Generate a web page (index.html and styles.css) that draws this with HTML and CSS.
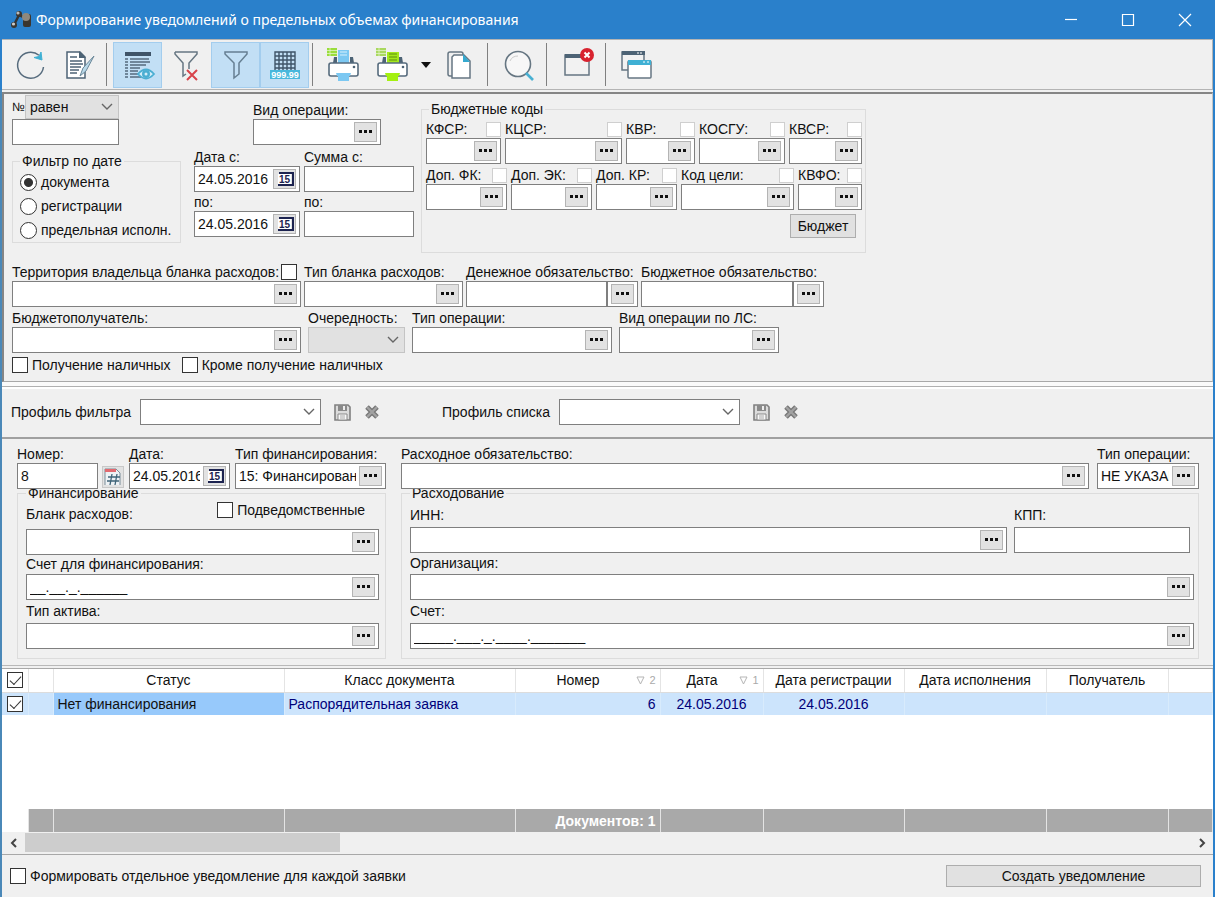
FILE: index.html
```html
<!DOCTYPE html>
<html lang="ru">
<head>
<meta charset="utf-8">
<title>Формирование уведомлений о предельных объемах финансирования</title>
<link rel="stylesheet" href="styles.css">
</head>
<body>
<svg class="sprite" aria-hidden="true">
  <symbol id="dots" viewBox="0 0 14 4"><path d="M0 0h3v3H0zM5 0h3v3H5zM10 0h3v3h-3z" fill="#111"/></symbol>
  <symbol id="chev" viewBox="0 0 12 8"><path d="M1 1l5 5 5-5" fill="none" stroke="#666" stroke-width="1.4"/></symbol>
  <symbol id="cal" viewBox="0 0 18 16"><path d="M3 2h14v13" fill="none" stroke="#1c2350" stroke-width="2"/><path d="M2 3h13v11H2z" fill="#fff"/><path d="M2 14h15" stroke="#1c2350" stroke-width="2"/><text x="3" y="12" font-size="10" font-weight="700" font-family="Liberation Sans, sans-serif" fill="#1c2350">15</text></symbol>
  <symbol id="save" viewBox="0 0 17 17"><path d="M1 1h13l2 2v13H1z" fill="#dcdcdc" stroke="#808080" stroke-width="1.600"/><path d="M4 1h9v6H4z" fill="#8a8a8a"/><path d="M9 2h2v4H9z" fill="#eee"/><path d="M4 10h9v6H4z" fill="#f8f8f8" stroke="#8a8a8a"/><path d="M6 12h5M6 14h5" stroke="#aaa"/></symbol>
  <symbol id="del" viewBox="0 0 14 14"><path d="M2 2l10 10M12 2L2 12" stroke="#777" stroke-width="5"/><path d="M2 2l10 10M12 2L2 12" stroke="#a2a2a2" stroke-width="2.4"/></symbol>
  <symbol id="tri" viewBox="0 0 9 9"><path d="M1 1h7L4.500 8z" fill="#fff" stroke="#b5b5b5"/></symbol>
</svg>

<header class="titlebar">
  <svg class="app-icon" viewBox="0 0 21 20"><path d="M3 15L8 5l7 3" stroke="#333" stroke-width="2.500" fill="none"/><rect x="12" y="4" width="8" height="13" rx="2" fill="#3a352f"/><circle cx="15" cy="7" r="4" fill="#8f887c"/><circle cx="8" cy="4" r="3" fill="#3a352f"/><circle cx="7" cy="3" r="1.600" fill="#bbb"/><circle cx="3" cy="15" r="3" fill="#3a352f"/><circle cx="2.500" cy="14" r="1.600" fill="#ccc"/></svg>
  <h1 class="title">Формирование уведомлений о предельных объемах финансирования</h1>
  <div class="win-controls">
    <button class="win-btn" aria-label="Свернуть"><svg viewBox="0 0 14 14"><path d="M1 6.500h12"/></svg></button>
    <button class="win-btn" aria-label="Развернуть"><svg viewBox="0 0 14 14"><path d="M1.500 1.500h11v11h-11z"/></svg></button>
    <button class="win-btn" aria-label="Закрыть"><svg viewBox="0 0 14 14"><path d="M1 1l12 12M13 1L1 13"/></svg></button>
  </div>
</header>

<nav class="toolbar">
  <button class="tool" aria-label="Обновить"><svg viewBox="0 0 36 36" fill="none" stroke="#566b7d" stroke-width="1.500"><path d="M31.500 20A13 13 0 1 1 27 8.300"/><path d="M29 5l1 8-8-2.500 5-1z" fill="#3fb0d4" stroke="#3fb0d4" stroke-width="1"/></svg></button>
  <button class="tool" aria-label="Редактировать"><svg viewBox="0 0 36 36"><path d="M6 5h13l5 5v21H6z" fill="#fff" stroke="#4d6375" stroke-width="1.500"/><path d="M18 4l7 7h-7z" fill="#4d6375"/><path d="M9 10h7M9 14h12M9 17h13M9 20h11M9 23h9M9 26h7" stroke="#4d6375" stroke-width="1.500"/><path d="M33 9L22 21l-3 8 6-5L33 9z" fill="#b9d9ea" stroke="#6a8798"/></svg></button>
  <span class="tool-sep"></span>
  <button class="tool tool-on" aria-label="Просмотр" aria-pressed="true"><svg viewBox="0 0 36 36"><path d="M5 5h26v4H5z" fill="#3f5468"/><path d="M5 12h3M10 12h19M5 15h3M10 15h20M5 18h3M10 18h16M5 21h3M10 21h10M5 24h3M10 24h8M5 27h3M10 27h8M5 30h3M10 30h11" stroke="#566b7d" stroke-width="1.400"/><path d="M18 27q8-9 16 0q-8 9-16 0z" fill="#d4edf8" stroke="#4aaed2" stroke-width="1.800"/><circle cx="26" cy="27" r="4" fill="#4aaed2"/><circle cx="26" cy="27" r="1.500" fill="#d4edf8"/></svg></button>
  <button class="tool" aria-label="Сбросить фильтр"><svg viewBox="0 0 36 36" fill="none"><path d="M6 5h22v2l-8 9v6M6 5v2l8 9v13l3-2" stroke="#667682" stroke-width="1.500"/><path d="M18 23l10 10M28 23L18 33" stroke="#d8434a" stroke-width="2"/></svg></button>
  <button class="tool tool-on" aria-label="Фильтр" aria-pressed="true"><svg viewBox="0 0 36 36" fill="none"><path d="M7 5h22v2l-8 9v11l-5 4V16L7 7z" stroke="#667f92" stroke-width="1.500"/></svg></button>
  <button class="tool tool-on" aria-label="Суммы" aria-pressed="true"><svg viewBox="0 0 36 36"><path d="M8 5h20v19H8zM12 5v19M16 5v19M20 5v19M24 5v19M8 9h20M8 13h20M8 17h20M8 21h20" fill="none" stroke="#3f5468" stroke-width="1.400"/><path d="M3 23h30v9H3z" fill="#48b8dc"/><text x="18" y="31" text-anchor="middle" font-size="9" font-weight="700" font-family="Liberation Sans, sans-serif" fill="#fff">999.99</text></svg></button>
  <span class="tool-sep"></span>
  <button class="tool" aria-label="Печать"><svg viewBox="0 0 36 36"><path d="M8 10h3v6H7zM24 10h3l1 6h-4z" fill="#4d6375"/><path d="M12 3h11v14H12z" fill="#7cc8f2"/><path d="M14 5h7M14 8h7" stroke="#d8f0fc"/><rect x="3" y="16" width="29" height="13" rx="2" fill="#fff" stroke="#566b7d" stroke-width="1.600"/><circle cx="28" cy="20" r="1.300" fill="#4d6375"/><path d="M10 26h15l-1 3h-1v5H12v-5h-1z" fill="#7cc8f2"/><path d="M1 1h10v8H1z" fill="#9add3c"/><path d="M1 3.500h10M1 6.500h10M4 1v8" stroke="#eaf7d6" stroke-width=".7"/></svg></button>
  <button class="tool" aria-label="Печать списка"><svg viewBox="0 0 36 36"><path d="M8 10h3v6H7zM24 10h3l1 6h-4z" fill="#4d6375"/><path d="M12 5h12v12H12z" fill="#a4e81c"/><path d="M14 7h8M14 10h8M14 13h8" stroke="#5f8e12"/><rect x="3" y="16" width="29" height="13" rx="2" fill="#fff" stroke="#566b7d" stroke-width="1.600"/><circle cx="28" cy="20" r="1.300" fill="#4d6375"/><path d="M10 26h15l-1 3h-1v5H12v-5h-1z" fill="#a4f010"/><path d="M1 1h10v8H1z" fill="#a9d85f"/><path d="M1 3.500h10M1 6.500h10M4 1v8" stroke="#eaf7d6" stroke-width=".7"/></svg></button>
  <button class="tool tool-arrow" aria-label="Варианты печати"><svg viewBox="0 0 10 6"><path d="M0 0h10L5 6z" fill="#111"/></svg></button>
  <button class="tool" aria-label="Копировать"><svg viewBox="0 0 36 36"><rect x="6" y="5" width="15" height="24" rx="2" fill="#f0f0f0" stroke="#667682" stroke-width="1.500"/><path d="M12 8h10l6 6v17H10V10z" fill="#fff" stroke="#667682" stroke-width="1.500"/><path d="M21 7l7 8h-7z" fill="#36a9cf"/></svg></button>
  <span class="tool-sep"></span>
  <button class="tool" aria-label="Поиск"><svg viewBox="0 0 36 36" fill="none"><circle cx="17" cy="17" r="12.500" fill="#f7f7f7" stroke="#667682" stroke-width="1.600"/><path d="M9 14q2-5 8-5" stroke="#ccc"/><path d="M25 26l7 7" stroke="#48b0d2" stroke-width="2.600"/></svg></button>
  <span class="tool-sep"></span>
  <button class="tool" aria-label="Закрыть окно"><svg viewBox="0 0 36 36"><path d="M5 8h24v20H5z" fill="#f2f2f2" stroke="#667682" stroke-width="1.500"/><path d="M5 7h17v4H5z" fill="#4d6375"/><circle cx="27" cy="8" r="7" fill="#d8232f"/><path d="M24.500 5.500l5 5M29.500 5.500l-5 5" stroke="#fff" stroke-width="2"/></svg></button>
  <span class="tool-sep"></span>
  <button class="tool" aria-label="Окна"><svg viewBox="0 0 36 36"><path d="M3 5h22v18H3z" fill="#f2f2f2" stroke="#667682" stroke-width="1.500"/><path d="M3 4h23v4H3z" fill="#4d6375"/><path d="M18 6h2M21 6h2" stroke="#fff"/><rect x="9" y="14" width="23" height="17" rx="1" fill="#fff" stroke="#667682" stroke-width="1.500"/><path d="M9 13h23v5H9z" fill="#3fb0d4"/><path d="M24 15h2M28 15h2" stroke="#fff"/></svg></button>
</nav>

<main class="work">
<section class="filter">
  <div class="filter-top">
    <div class="col-doc">
      <div class="num-row"><label class="num-label" for="num">№</label>
        <span class="combo combo-gray num-op"><select aria-label="Условие"><option>равен</option></select><svg class="chev"><use href="#chev"/></svg></span></div>
      <div class="box w-num"><input id="num" type="text"></div>
      <fieldset class="group radios">
        <legend>Фильтр по дате</legend>
        <label class="radio"><input type="radio" name="kind" checked>документа</label>
        <label class="radio"><input type="radio" name="kind">регистрации</label>
        <label class="radio"><input type="radio" name="kind">предельная исполн.</label>
      </fieldset>
    </div>
    <div class="col-dates">
      <div class="field field-op"><label for="op">Вид операции:</label><div class="box"><input id="op" type="text"><button class="pick" aria-label="Выбрать"><svg><use href="#dots"/></svg></button></div></div>
      <div class="pair pair-first">
        <div class="field w-date"><label for="d1">Дата с:</label><div class="box"><input id="d1" type="text" value="24.05.2016"><button class="pick cal" aria-label="Календарь"><svg><use href="#cal"/></svg></button></div></div>
        <div class="field w-sum"><label for="s1">Сумма с:</label><div class="box"><input id="s1" type="text"></div></div>
      </div>
      <div class="pair">
        <div class="field w-date"><label for="d2">по:</label><div class="box"><input id="d2" type="text" value="24.05.2016"><button class="pick cal" aria-label="Календарь"><svg><use href="#cal"/></svg></button></div></div>
        <div class="field w-sum"><label for="s2">по:</label><div class="box"><input id="s2" type="text"></div></div>
      </div>
    </div>
    <fieldset class="group codes">
      <legend>Бюджетные коды</legend>
      <div class="code-row code-row-a">
        <div class="field"><div class="cap"><label for="c1">КФСР:</label><input class="mini" type="checkbox" aria-label="Кроме КФСР"></div><div class="box"><input id="c1" type="text"><button class="pick" aria-label="Выбрать"><svg><use href="#dots"/></svg></button></div></div>
        <div class="field"><div class="cap"><label for="c2">КЦСР:</label><input class="mini" type="checkbox" aria-label="Кроме КЦСР"></div><div class="box"><input id="c2" type="text"><button class="pick" aria-label="Выбрать"><svg><use href="#dots"/></svg></button></div></div>
        <div class="field"><div class="cap"><label for="c3">КВР:</label><input class="mini" type="checkbox" aria-label="Кроме КВР"></div><div class="box"><input id="c3" type="text"><button class="pick" aria-label="Выбрать"><svg><use href="#dots"/></svg></button></div></div>
        <div class="field"><div class="cap"><label for="c4">КОСГУ:</label><input class="mini" type="checkbox" aria-label="Кроме КОСГУ"></div><div class="box"><input id="c4" type="text"><button class="pick" aria-label="Выбрать"><svg><use href="#dots"/></svg></button></div></div>
        <div class="field"><div class="cap"><label for="c5">КВСР:</label><input class="mini" type="checkbox" aria-label="Кроме КВСР"></div><div class="box"><input id="c5" type="text"><button class="pick" aria-label="Выбрать"><svg><use href="#dots"/></svg></button></div></div>
      </div>
      <div class="code-row code-row-b">
        <div class="field"><div class="cap"><label for="c6">Доп. ФК:</label><input class="mini" type="checkbox" aria-label="Кроме Доп. ФК"></div><div class="box"><input id="c6" type="text"><button class="pick" aria-label="Выбрать"><svg><use href="#dots"/></svg></button></div></div>
        <div class="field"><div class="cap"><label for="c7">Доп. ЭК:</label><input class="mini" type="checkbox" aria-label="Кроме Доп. ЭК"></div><div class="box"><input id="c7" type="text"><button class="pick" aria-label="Выбрать"><svg><use href="#dots"/></svg></button></div></div>
        <div class="field"><div class="cap"><label for="c8">Доп. КР:</label><input class="mini" type="checkbox" aria-label="Кроме Доп. КР"></div><div class="box"><input id="c8" type="text"><button class="pick" aria-label="Выбрать"><svg><use href="#dots"/></svg></button></div></div>
        <div class="field"><div class="cap"><label for="c9">Код цели:</label><input class="mini" type="checkbox" aria-label="Кроме кода цели"></div><div class="box"><input id="c9" type="text"><button class="pick" aria-label="Выбрать"><svg><use href="#dots"/></svg></button></div></div>
        <div class="field"><div class="cap"><label for="c10">КВФО:</label><input class="mini" type="checkbox" aria-label="Кроме КВФО"></div><div class="box"><input id="c10" type="text"><button class="pick" aria-label="Выбрать"><svg><use href="#dots"/></svg></button></div></div>
      </div>
      <button class="btn btn-budget">Бюджет</button>
    </fieldset>
  </div>

  <div class="filter-row filter-row-a">
    <div class="field w-long"><div class="cap"><label for="f1">Территория владельца бланка расходов:</label><input class="check" type="checkbox" aria-label="Кроме территории"></div><div class="box"><input id="f1" type="text"><button class="pick" aria-label="Выбрать"><svg><use href="#dots"/></svg></button></div></div>
    <div class="field w-blank"><label for="f2">Тип бланка расходов:</label><div class="box"><input id="f2" type="text"><button class="pick" aria-label="Выбрать"><svg><use href="#dots"/></svg></button></div></div>
    <div class="field w-money"><label for="f3">Денежное обязательство:</label><div class="box split"><input id="f3" type="text"><button class="pick" aria-label="Выбрать"><svg><use href="#dots"/></svg></button></div></div>
    <div class="field w-duty"><label for="f4">Бюджетное обязательство:</label><div class="box split"><input id="f4" type="text"><button class="pick" aria-label="Выбрать"><svg><use href="#dots"/></svg></button></div></div>
  </div>
  <div class="filter-row filter-row-b">
    <div class="field w-long"><label for="f5">Бюджетополучатель:</label><div class="box"><input id="f5" type="text"><button class="pick" aria-label="Выбрать"><svg><use href="#dots"/></svg></button></div></div>
    <div class="field w-order"><label for="f6">Очередность:</label><span class="combo combo-gray"><select id="f6"><option></option></select><svg class="chev"><use href="#chev"/></svg></span></div>
    <div class="field w-type"><label for="f7">Тип операции:</label><div class="box"><input id="f7" type="text"><button class="pick" aria-label="Выбрать"><svg><use href="#dots"/></svg></button></div></div>
    <div class="field w-acc"><label for="f8">Вид операции по ЛС:</label><div class="box"><input id="f8" type="text"><button class="pick" aria-label="Выбрать"><svg><use href="#dots"/></svg></button></div></div>
  </div>
  <div class="filter-checks">
    <label class="tick"><input class="check" type="checkbox">Получение наличных</label>
    <label class="tick"><input class="check" type="checkbox">Кроме получение наличных</label>
  </div>
</section>

<section class="profiles">
  <div class="profile profile-a"><label for="p1">Профиль фильтра</label><span class="combo"><select id="p1"><option></option></select><svg class="chev"><use href="#chev"/></svg></span>
    <button class="icon-btn" aria-label="Сохранить"><svg class="ic-save"><use href="#save"/></svg></button><button class="icon-btn" aria-label="Удалить"><svg class="ic-del"><use href="#del"/></svg></button></div>
  <div class="profile profile-b"><label for="p2">Профиль списка</label><span class="combo"><select id="p2"><option></option></select><svg class="chev"><use href="#chev"/></svg></span>
    <button class="icon-btn" aria-label="Сохранить"><svg class="ic-save"><use href="#save"/></svg></button><button class="icon-btn" aria-label="Удалить"><svg class="ic-del"><use href="#del"/></svg></button></div>
</section>

<section class="doc">
  <div class="doc-top doc-top-left">
    <div class="field w-no"><label for="n1">Номер:</label><div class="box"><input id="n1" type="text" value="8"></div></div>
    <button class="gen" aria-label="Сгенерировать номер"><svg viewBox="0 0 20 20"><path d="M2 18V2h11l4 4v12" fill="#eef2f5" stroke="#7b8d99"/><path d="M2 2h11v3H2z" fill="#e26a70"/><path d="M5 10h12M4 14h12M9 7L7 18M14 7l-2 11" stroke="#3f6478" stroke-width="1.300"/></svg></button>
    <div class="field w-day"><label for="n2">Дата:</label><div class="box"><input id="n2" type="text" value="24.05.2016"><button class="pick cal" aria-label="Календарь"><svg><use href="#cal"/></svg></button></div></div>
    <div class="field w-fin"><label for="n3">Тип финансирования:</label><div class="box"><input id="n3" type="text" value="15: Финансирование"><button class="pick" aria-label="Выбрать"><svg><use href="#dots"/></svg></button></div></div>
  </div>
  <div class="doc-top doc-top-right">
    <div class="field grow"><label for="n4">Расходное обязательство:</label><div class="box"><input id="n4" type="text"><button class="pick" aria-label="Выбрать"><svg><use href="#dots"/></svg></button></div></div>
    <div class="field w-optype"><label for="n5">Тип операции:</label><div class="box"><input id="n5" type="text" value="НЕ УКАЗАНА"><button class="pick" aria-label="Выбрать"><svg><use href="#dots"/></svg></button></div></div>
  </div>
  <fieldset class="group doc-group">
    <legend>Финансирование</legend>
    <div class="field row-1"><div class="cap"><label for="g1">Бланк расходов:</label><label class="tick sub"><input class="check" type="checkbox">Подведомственные</label></div><div class="box"><input id="g1" type="text"><button class="pick" aria-label="Выбрать"><svg><use href="#dots"/></svg></button></div></div>
    <div class="field row-2"><label for="g2">Счет для финансирования:</label><div class="box"><input id="g2" type="text" value="__.__._.______"><button class="pick" aria-label="Выбрать"><svg><use href="#dots"/></svg></button></div></div>
    <div class="field row-3"><label for="g3">Тип актива:</label><div class="box"><input id="g3" type="text"><button class="pick" aria-label="Выбрать"><svg><use href="#dots"/></svg></button></div></div>
  </fieldset>
  <fieldset class="group doc-group spend">
    <legend>Расходование</legend>
    <div class="inn-row">
      <div class="field grow"><label for="h1">ИНН:</label><div class="box"><input id="h1" type="text"><button class="pick" aria-label="Выбрать"><svg><use href="#dots"/></svg></button></div></div>
      <div class="field w-kpp"><label for="h2">КПП:</label><div class="box"><input id="h2" type="text"></div></div>
    </div>
    <div class="field row-2"><label for="h3">Организация:</label><div class="box"><input id="h3" type="text"><button class="pick" aria-label="Выбрать"><svg><use href="#dots"/></svg></button></div></div>
    <div class="field row-3"><label for="h4">Счет:</label><div class="box"><input id="h4" type="text" value="_____.___._.____._______"><button class="pick" aria-label="Выбрать"><svg><use href="#dots"/></svg></button></div></div>
  </fieldset>
</section>

<section class="list">
  <table class="grid">
    <colgroup><col class="c-check"><col class="c-mark"><col class="c-status"><col class="c-class"><col class="c-num"><col class="c-date"><col class="c-reg"><col class="c-exec"><col class="c-rcpt"><col></colgroup>
    <thead><tr><th><input class="check" type="checkbox" checked aria-label="Выбрать все"></th><th></th><th>Статус</th><th>Класс документа</th>
      <th><span class="sorted"><span>Номер</span><small><svg><use href="#tri"/></svg>2</small></span></th>
      <th><span class="sorted"><span>Дата</span><small><svg><use href="#tri"/></svg>1</small></span></th>
      <th>Дата регистрации</th><th>Дата исполнения</th><th>Получатель</th><th></th></tr></thead>
    <tbody><tr class="row"><td><input class="check" type="checkbox" checked aria-label="Выбрать строку"></td><td></td><td class="status">Нет финансирования</td><td>Распорядительная заявка</td><td class="num">6</td><td class="mid">24.05.2016</td><td class="mid">24.05.2016</td><td></td><td></td><td></td></tr>
      <tr class="filler"><td colspan="10"></td></tr></tbody>
    <tfoot><tr><td></td><td></td><td></td><td></td><td class="total">Документов: 1</td><td></td><td></td><td></td><td></td><td></td></tr></tfoot>
  </table>
  <div class="scroll"><button class="scroll-btn" aria-label="Влево"><svg viewBox="0 0 8 10"><path d="M6 1L2 5l4 4"/></svg></button><div class="track"><div class="thumb"></div></div><button class="scroll-btn" aria-label="Вправо"><svg viewBox="0 0 8 10"><path d="M2 1l4 4-4 4"/></svg></button></div>
</section>

<footer class="actions">
  <label class="tick"><input class="check" type="checkbox">Формировать отдельное уведомление для каждой заявки</label>
  <button class="btn btn-create">Создать уведомление</button>
</footer>
</main>
</body>
</html>
```
FILE: styles.css
```css
* { box-sizing: border-box; }
body {
  margin: 0;
  min-height: 100vh;
  display: flex;
  flex-direction: column;
  background: #2a80cb;
  color: #111;
  font: 14px/18px "Liberation Sans", Arial, sans-serif;
}
input, button, select { font: inherit; color: inherit; margin: 0; }
button { padding: 0; border: 0; background: none; }
label { white-space: nowrap; }
.sprite { display: none; }

/* Title bar */
.titlebar { display: flex; align-items: center; height: 39px; padding: 0 2px 0 11px; color: #fff; }
.app-icon { width: 21px; height: 20px; margin-right: 4px; }
.title { flex: 1; margin: 0; font: 400 14px/20px "Noto Sans", "Open Sans", sans-serif; white-space: nowrap; }
.win-controls { display: flex; }
.win-btn { width: 57px; height: 38px; display: grid; place-items: center; }
.win-btn svg { width: 14px; height: 14px; fill: none; stroke: #fff; stroke-width: 1.2; }

/* Toolbar */
.toolbar { display: flex; align-items: center; height: 51px; margin: 0 2px; padding-left: 3px; border: 1px solid #b4b4b4; border-left: 0; background: #f0f0f0; }
.tool { width: 49px; height: 46px; display: grid; place-items: center; }
.tool svg { width: 36px; height: 36px; }
.tool-on { background: #c2dff5; border: 1px solid #a3cdee; }
.tool-arrow { width: 18px; }
.tool-arrow svg { width: 10px; height: 6px; }
.tool-sep { width: 10px; height: 43px; display: flex; padding-left: 3px; }
.tool-sep::before { content: ""; width: 1px; background: #808080; }

.work { flex: 1; display: flex; flex-direction: column; border: solid #2a80cb; border-width: 0 2px; border-left-color: #4a88b8; background: #f0f0f0; }

/* Form controls */
.field { display: flex; flex-direction: column; min-width: 0; }
.field > label, .cap { height: 18px; }
.cap { display: flex; justify-content: space-between; align-items: center; }
.box { display: flex; align-items: center; height: 26px; padding-right: 3px; border: 1px solid #7f7f7f; background: #fff; }
.box input { flex: 1; min-width: 0; width: 0; height: 24px; padding: 0 3px; border: 0; background: transparent; outline: 0; }
.pick { flex: none; width: 23px; height: 20px; display: grid; place-items: center; border: 1px solid #b4b4b4; background: #e2e2e2; }
.pick svg { width: 14px; height: 4px; }
.pick.cal svg { width: 18px; height: 16px; }
.box.split input { margin-right: 3px; border-right: 2px solid #7f7f7f; }
.combo { display: grid; align-items: center; height: 26px; border: 1px solid #7f7f7f; background: #fff; }
.combo select { grid-area: 1 / 1; width: 100%; height: 24px; padding: 0 4px; border: 0; background: transparent; appearance: none; outline: 0; }
.combo .chev { grid-area: 1 / 1; justify-self: end; width: 12px; height: 8px; margin-right: 5px; pointer-events: none; }
.combo-gray { border-color: #c4c4c4; background: #e1e1e1; }
.check, .mini { appearance: none; flex: none; width: 16px; height: 16px; border: 1px solid #333; background: #fff; }
.mini { width: 15px; height: 15px; border-color: #cfcfcf; }
.check:checked { display: inline-grid; place-items: center; }
.check:checked::before { content: ""; width: 10px; height: 5px; border: solid #333; border-width: 0 0 1px 1px; transform: translateY(-1px) rotate(-47deg); }
.tick { display: inline-flex; align-items: center; gap: 4px; }
.group { min-width: 0; margin: 0; padding: 0; border: 1px solid #dcdcdc; }
.group legend { height: 16px; margin-left: 7px; padding: 0 2px; line-height: 16px; }
.btn { border: 1px solid #adadad; background: #e1e1e1; }
.grow { flex: 1; }

/* Filter panel */
.filter { margin-top: 2px; padding: 0 8px 7px; border: 2px solid #858585; border-width: 2px 1px 1px 2px; border-right-color: #c4c4c4; border-bottom-color: #a8a8a8; }
.filter-top { display: flex; align-items: flex-start; }
.col-doc { width: 169px; padding-top: 1px; }
.num-row { display: flex; align-items: center; height: 24px; width: 107px; }
.num-label { width: 13px; font-size: 12px; }
.num-op { flex: 1; height: 24px; }
.num-op select { height: 22px; }
.w-num { width: 107px; }
.radios { margin-top: 8px; }
.radio { display: flex; align-items: center; gap: 4px; height: 24px; padding-left: 7px; }
.radio:first-of-type { margin-top: 1px; }
.radio input { appearance: none; width: 17px; height: 17px; border: 1px solid #333; border-radius: 50%; background: #fff; }
.radio input:checked { background: radial-gradient(circle, #333 0 4px, #fff 5px); }
.col-dates { width: 220px; margin-left: 13px; padding-top: 7px; }
.field-op { width: 128px; margin-left: 59px; }
.pair { display: flex; gap: 4px; margin-top: 1px; }
.pair-first { margin-top: 3px; }
.w-date { width: 106px; }
.w-sum { width: 110px; }
.codes { width: 445px; margin: 7px 0 0 7px; padding: 3px 3px 14px 4px; display: flow-root; }
.codes legend { margin-left: 3px; }
.code-row { display: grid; column-gap: 4px; }
.code-row-a { grid-template-columns: 75fr 117fr 69fr 86fr 73fr; }
.code-row-b { grid-template-columns: 81fr 81fr 81fr 113fr 64fr; margin-top: 2px; }
.btn-budget { display: block; width: 66px; height: 24px; margin: 4px 6px 0 auto; }
.filter-row { display: flex; }
.filter-row-a { gap: 3px; margin-top: 10px; }
.filter-row-b { gap: 7px; margin-top: 2px; }
.filter-row-a .check { margin-right: 4px; }
.w-long { width: 289px; }
.w-blank { width: 159px; }
.w-money { width: 172px; }
.w-duty { width: 183px; }
.w-order { width: 97px; }
.w-type { width: 200px; }
.w-acc { width: 160px; }
.filter-checks { display: flex; gap: 11px; margin-top: 3px; }

/* Profiles */
.profiles { display: flex; align-items: center; height: 51px; margin-top: 4px; padding-left: 9px; border-top: 1px solid #b0b0b0; box-shadow: inset 0 2px #fff, 0 -4px #fafafa; }
.profile { display: flex; align-items: center; }
.profile-b { margin-left: 55px; }
.profile label { width: 129px; }
.profile-b label { width: 117px; }
.profile .combo { width: 181px; }
.icon-btn { display: grid; width: 30px; height: 20px; place-items: center; }
.profile .combo + .icon-btn { margin-left: 6px; }
.ic-save { width: 17px; height: 17px; }
.ic-del { width: 14px; height: 14px; }

/* Document panel */
.doc { display: grid; grid-template-columns: 369px minmax(0, 1fr); column-gap: 15px; padding: 6px 14px 6px 15px; border-top: 2px solid #a0a0a0; border-bottom: 1px solid #b8b8b8; }
.doc-top { display: flex; align-items: flex-end; position: relative; z-index: 1; }
.doc-top-right { gap: 8px; }
.w-no { width: 81px; }
.gen { width: 22px; height: 22px; margin: 0 5px 1px 4px; display: grid; place-items: center; border: 1px solid #c8c8c8; background: #e2e2e2; }
.gen svg { width: 20px; height: 20px; }
.w-day { width: 101px; margin-right: 5px; }
.w-fin { flex: 1; }
.w-optype { width: 102px; }
.doc-group { margin-top: -4px; padding: 0 6px 9px 8px; }
.doc-group legend { margin-left: 0; }
.doc-group .row-1 .cap { height: 28px; align-items: flex-start; }
.doc-group .row-1 .cap > label:first-child { line-height: 26px; }
.doc-group .row-1 .sub { margin-right: 14px; }
.doc-group .row-2 > label { height: 19px; }
.doc-group .row-3 > label { height: 23px; line-height: 23px; }
.spend { padding-right: 4px; }
.inn-row { display: flex; gap: 7px; padding-right: 4px; }
.inn-row label { height: 26px; line-height: 28px; }
.spend .row-2 > label { height: 21px; line-height: 21px; }
.w-kpp { width: 176px; }

/* Document list */
.list { flex: 1; display: flex; flex-direction: column; margin-top: 2px; border: 1px solid #a8a8a8; border-width: 1px 0; background: #fff; }
.grid { flex: 1; width: 100%; height: 164px; table-layout: fixed; border-collapse: collapse; }
.c-check { width: 26px; }
.c-mark { width: 25px; }
.c-status { width: 231px; }
.c-class { width: 231px; }
.c-num { width: 145px; }
.c-date { width: 103px; }
.c-reg { width: 141px; }
.c-exec { width: 142px; }
.c-rcpt { width: 122px; }
.grid th, .grid td { height: 23px; padding: 0 4px; border-right: 1px solid #e4e4e4; font-weight: 400; line-height: 16px; white-space: nowrap; }
.grid th { border-bottom: 1px solid #dcdcdc; }
.grid .check { display: grid; margin-left: 1px; }
.sorted { display: flex; align-items: center; }
.sorted > span { flex: 1; text-align: center; }
.sorted small { display: flex; align-items: center; gap: 4px; color: #aaa; font-size: 11px; }
.sorted svg { width: 9px; height: 9px; }
.row td { background: #cce4fc; color: #00007a; border-right-color: #d8ebfc; }
.row td.status { background: #97c9fb; color: #111; }
.row .num { text-align: right; }
.row .mid { text-align: center; }
.grid .filler td { height: auto; border: 0; }
.grid tfoot td { background: #a9a9a9; color: #fff; font-weight: 700; }
.grid tfoot td:first-child { background: #fff; }
.grid tfoot .total { text-align: right; font-weight: 700; }
.scroll { display: flex; height: 22px; background: #f0f0f0; }
.scroll-btn { width: 23px; display: grid; place-items: center; }
.scroll-btn svg { width: 8px; height: 10px; fill: none; stroke: #444; stroke-width: 2; }
.track { flex: 1; padding: 1px 0; }
.thumb { width: 27%; height: 19px; background: #cdcdcd; }

/* Footer */
.actions { display: flex; align-items: center; justify-content: space-between; height: 42px; padding: 0 12px 0 8px; }
.btn-create { width: 255px; height: 22px; }
```
